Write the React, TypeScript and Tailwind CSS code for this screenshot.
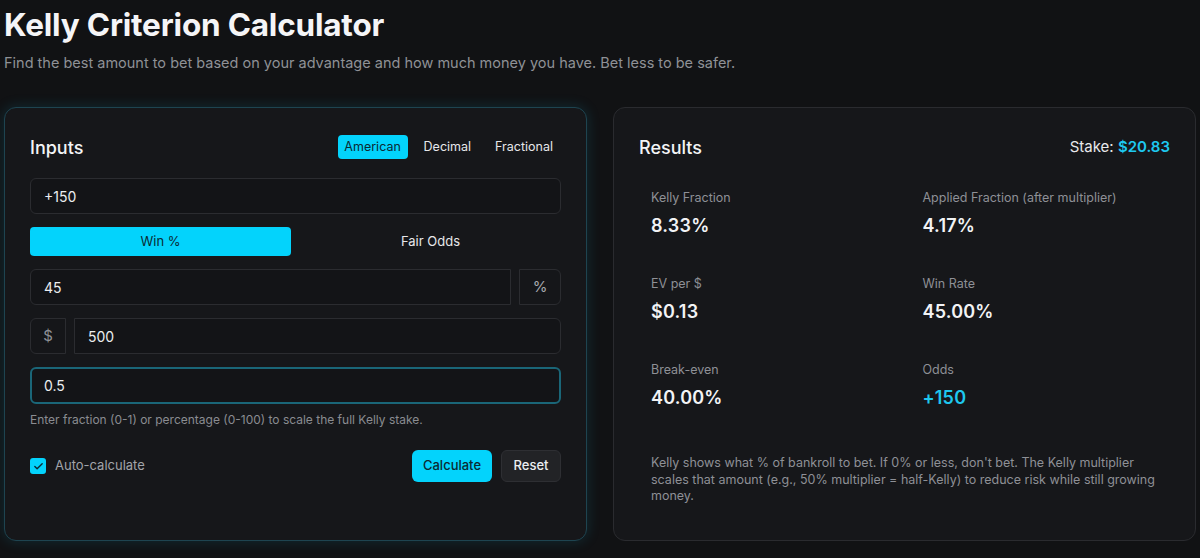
import React from "react";

const font = { fontFamily: "Inter, 'Noto Sans', sans-serif" };

function Stat({ label, value, accent }: { label: string; value: string; accent?: boolean }) {
  return (
    <div className="p-3">
      <div className="text-[12.5px] leading-5 text-[#8e9096]">{label}</div>
      <div className={`mt-[6px] text-[18px] leading-6 font-semibold tracking-[0.2px] ${accent ? "text-[#1ec8ef]" : "text-[#f2f3f5]"}`}>{value}</div>
    </div>
  );
}

export default function App() {
  return (
    <div style={font} className="min-h-[558px] w-[1200px] bg-[#111214] px-1 text-white">
      <h1 className="pt-[8px] text-[31.5px] leading-[34px] font-bold text-[#f5f5f7] tracking-[-0.2px]">Kelly Criterion Calculator</h1>
      <p className="mt-[11px] text-[14.5px] leading-5 text-[#8f9196]">
        Find the best amount to bet based on your advantage and how much money you have. Bet less to be safer.
      </p>

      <div className="mt-[34px] grid grid-cols-2 gap-[26px]">
        {/* Inputs card */}
        <div className="h-[434px] rounded-xl border border-[#1e4450] bg-[#16171a] px-[25px] pt-[25px] shadow-[0_0_14px_rgba(20,170,210,0.18)]">
          <div className="flex h-[28px] items-center justify-between">
            <h2 className="text-[18px] font-medium text-[#f3f4f6]">Inputs</h2>
            <div className="flex items-center gap-2 text-[12.5px]">
              <button className="h-6 w-[70px] rounded-[4px] bg-[#03d3fc] text-[#0b2a33]">American</button>
              <button className="h-6 px-2 text-[#e6e7ea]">Decimal</button>
              <button className="h-6 px-2 text-[#e6e7ea]">Fractional</button>
            </div>
          </div>

          <div className="mt-[17px] flex flex-col gap-[13px]">
            <div className="flex h-9 items-center rounded-md border border-[#2b2c30] bg-[#131417] px-[13px] text-[14px] text-[#eceef0]">+150</div>

            <div className="grid h-[29px] grid-cols-2 gap-[9px] text-[13px]">
              <div className="flex items-center justify-center rounded-[4px] bg-[#03d3fc] text-[#0b2a33]">Win %</div>
              <div className="flex items-center justify-center text-[#e6e7ea]">Fair Odds</div>
            </div>

            <div className="flex h-9 gap-2">
              <div className="flex flex-1 items-center rounded-l-md border border-[#2b2c30] bg-[#131417] px-[13px] text-[14px] text-[#eceef0]">45</div>
              <div className="flex w-[42px] items-center justify-center rounded-r-md border border-[#2b2c30] bg-[#151619] text-[15px] text-[#a6a8ad]">%</div>
            </div>

            <div className="flex h-9 gap-2">
              <div className="flex w-[36px] items-center justify-center rounded-l-md border border-[#2b2c30] bg-[#151619] text-[15px] text-[#8e9096]">$</div>
              <div className="flex flex-1 items-center rounded-r-md border border-[#2b2c30] bg-[#131417] px-[13px] text-[14px] text-[#eceef0]">500</div>
            </div>

            <div className="flex h-[37px] items-center rounded-md border-2 border-[#1a6678] bg-[#131417] px-[12px] text-[14px] text-[#eceef0]">0.5</div>
          </div>

          <p className="mt-[8px] text-[12px] leading-4 text-[#8a8c91]">Enter fraction (0-1) or percentage (0-100) to scale the full Kelly stake.</p>

          <div className="mt-[22px] flex items-center justify-between">
            <label className="flex items-center gap-[9px] text-[13px] text-[#a2a4a9]">
              <span className="flex h-4 w-4 items-center justify-center rounded-[3px] bg-[#03d3fc]">
                <svg width="11" height="11" viewBox="0 0 24 24" fill="none" stroke="#0b2a33" strokeWidth="3" strokeLinecap="round" strokeLinejoin="round">
                  <path d="M20 6 9 17l-5-5" />
                </svg>
              </span>
              Auto-calculate
            </label>
            <div className="flex gap-[9px] text-[13px]">
              <button className="h-[32px] w-[80px] rounded-md bg-[#03d3fc] text-[#0b2a33] font-medium">Calculate</button>
              <button className="h-[32px] w-[60px] rounded-md border border-[#2e2f33] bg-[#222326] text-[#eceef0] font-medium">Reset</button>
            </div>
          </div>
        </div>

        {/* Results card */}
        <div className="h-[434px] rounded-xl border border-[#2a2b2f] bg-[#16171a] px-[25px] pt-[25px]">
          <div className="flex h-[28px] items-center justify-between">
            <h2 className="text-[18px] font-medium text-[#f3f4f6]">Results</h2>
            <div className="text-[15px] text-[#e8e9eb]">
              Stake: <span className="font-semibold text-[#1ec8ef]">$20.83</span>
            </div>
          </div>

          <div className="mt-[15px] grid grid-cols-2 gap-x-[12px] gap-y-[12px]">
            <Stat label="Kelly Fraction" value="8.33%" />
            <Stat label="Applied Fraction (after multiplier)" value="4.17%" />
            <Stat label="EV per $" value="$0.13" />
            <Stat label="Win Rate" value="45.00%" />
            <Stat label="Break-even" value="40.00%" />
            <Stat label="Odds" value="+150" accent />
          </div>

          <p className="mt-[33px] px-3 text-[12.5px] leading-[16.5px] text-[#8e9096]">
            Kelly shows what % of bankroll to bet. If 0% or less, don't bet. The Kelly multiplier scales that amount (e.g., 50% multiplier = half-Kelly) to reduce risk while still growing money.
          </p>
        </div>
      </div>
    </div>
  );
}
